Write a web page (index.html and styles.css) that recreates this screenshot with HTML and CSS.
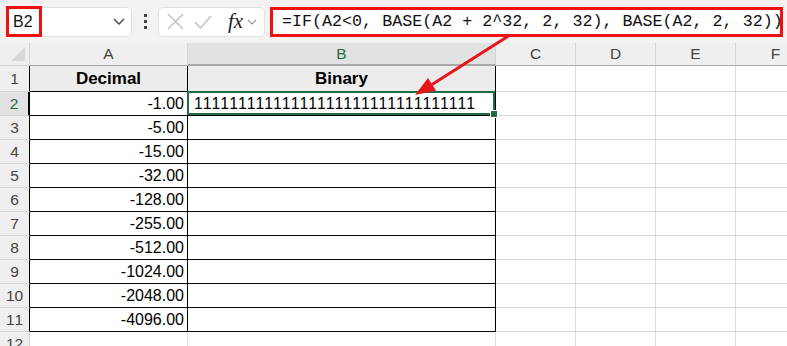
FILE: index.html
```html
<!DOCTYPE html>
<html lang="en">
<head>
  <meta charset="UTF-8">
  <title>Decimal to Binary</title>
  <link rel="stylesheet" href="styles.css">
</head>
<body>

  <div class="toolbar">
    <div class="namebox">
      <span class="cellref">B2</span>
      <svg class="chev" width="12" height="7" viewBox="0 0 12 7"><path d="M1 1 L6 6 L11 1" fill="none" stroke="#444" stroke-width="1.4"/></svg>
    </div>
    <div class="dots"><i></i><i></i><i></i></div>
    <div class="fxbox">
      <svg width="17" height="17" viewBox="0 0 17 17"><path d="M1 1 L16 16 M16 1 L1 16" stroke="#bdbdbd" stroke-width="1.3"/></svg>
      <svg width="18" height="16" viewBox="0 0 18 16"><path d="M1 8 L6.5 14 L17 2" fill="none" stroke="#bdbdbd" stroke-width="1.3"/></svg>
      <span class="fx">fx</span>
      <svg width="10" height="6" viewBox="0 0 10 6"><path d="M1 1 L5 5 L9 1" fill="none" stroke="#999" stroke-width="1.2"/></svg>
    </div>
    <div class="formula">=IF(A2&lt;0, BASE(A2 + 2^32, 2, 32), BASE(A2, 2, 32))</div>
  </div>

  <div class="sheet">
    <div class="hd corner"><span class="tri"></span></div>
    <div class="hd col">A</div>
    <div class="hd col colsel">B</div>
    <div class="hd col">C</div>
    <div class="hd col">D</div>
    <div class="hd col">E</div>
    <div class="hd col">F</div>
    <div class="hd col">G</div>

    <div class="hd row edge">1</div>
    <div class="c data title">Decimal</div>
    <div class="c data title">Binary</div>
    <div class="c"></div><div class="c"></div><div class="c"></div><div class="c"></div><div class="c"></div>

    <div class="hd row edge rowsel">2</div>
    <div class="c data num">-1.00</div>
    <div class="c data bin sel">11111111111111111111111111111111</div>
    <div class="c"></div><div class="c"></div><div class="c"></div><div class="c"></div><div class="c"></div>

    <div class="hd row edge">3</div>
    <div class="c data num">-5.00</div>
    <div class="c data"></div>
    <div class="c"></div><div class="c"></div><div class="c"></div><div class="c"></div><div class="c"></div>

    <div class="hd row edge">4</div>
    <div class="c data num">-15.00</div>
    <div class="c data"></div>
    <div class="c"></div><div class="c"></div><div class="c"></div><div class="c"></div><div class="c"></div>

    <div class="hd row edge">5</div>
    <div class="c data num">-32.00</div>
    <div class="c data"></div>
    <div class="c"></div><div class="c"></div><div class="c"></div><div class="c"></div><div class="c"></div>

    <div class="hd row edge">6</div>
    <div class="c data num">-128.00</div>
    <div class="c data"></div>
    <div class="c"></div><div class="c"></div><div class="c"></div><div class="c"></div><div class="c"></div>

    <div class="hd row edge">7</div>
    <div class="c data num">-255.00</div>
    <div class="c data"></div>
    <div class="c"></div><div class="c"></div><div class="c"></div><div class="c"></div><div class="c"></div>

    <div class="hd row edge">8</div>
    <div class="c data num">-512.00</div>
    <div class="c data"></div>
    <div class="c"></div><div class="c"></div><div class="c"></div><div class="c"></div><div class="c"></div>

    <div class="hd row edge">9</div>
    <div class="c data num">-1024.00</div>
    <div class="c data"></div>
    <div class="c"></div><div class="c"></div><div class="c"></div><div class="c"></div><div class="c"></div>

    <div class="hd row edge">10</div>
    <div class="c data num">-2048.00</div>
    <div class="c data"></div>
    <div class="c"></div><div class="c"></div><div class="c"></div><div class="c"></div><div class="c"></div>

    <div class="hd row edge">11</div>
    <div class="c data num">-4096.00</div>
    <div class="c data"></div>
    <div class="c"></div><div class="c"></div><div class="c"></div><div class="c"></div><div class="c"></div>

    <div class="hd row">12</div>
    <div class="c"></div><div class="c"></div>
    <div class="c"></div><div class="c"></div><div class="c"></div><div class="c"></div><div class="c"></div>
  </div>

  <svg class="arrow" width="787" height="346" viewBox="0 0 787 346">
    <line x1="510" y1="35" x2="432" y2="84.5" stroke="#e8141b" stroke-width="3"/>
    <polygon points="415,95 436,90.5 428,78" fill="#e8141b"/>
  </svg>

</body>
</html>
```

FILE: styles.css
```css
body {
  margin: 0;
  width: 787px;
  height: 346px;
  overflow: hidden;
  position: relative;
  background: #fff;
  font-family: 'Liberation Sans', Arial, sans-serif;
  font-kerning: none;
}

/* formula bar */
.toolbar {
  height: 43px;
  background: #f3f2f1;
  display: flex;
  align-items: center;
  padding: 0 4px 0 6px;
  box-sizing: border-box;
}

.namebox {
  width: 126px;
  height: 30px;
  background: #fff;
  border: 1px solid #e3e1df;
  border-radius: 5px;
  box-sizing: border-box;
  display: flex;
  align-items: center;
  justify-content: space-between;
  padding-right: 6px;
}

.cellref {
  width: 36px;
  height: 31px;
  margin-left: -1px;
  border: 3px solid #ee1111;
  box-sizing: border-box;
  font-size: 16px;
  color: #111;
  display: flex;
  align-items: center;
  padding-left: 4px;
}

.dots {
  width: 26px;
  display: flex;
  flex-direction: column;
  align-items: center;
  gap: 3px;
}

.dots i {
  width: 3px;
  height: 3px;
  background: #444;
}

.fxbox {
  width: 107px;
  height: 30px;
  background: #fff;
  border: 1px solid #e3e1df;
  border-radius: 5px;
  box-sizing: border-box;
  display: flex;
  align-items: center;
  gap: 10px;
  padding-left: 8px;
}

.fx {
  font-family: 'Liberation Serif', serif;
  font-style: italic;
  font-size: 21px;
  color: #222;
  margin-left: 6px;
  margin-right: -6px;
}

.formula {
  flex: 1;
  height: 30px;
  margin-left: 5px;
  border: 3px solid #ee1111;
  box-sizing: border-box;
  background: #fff;
  font-family: 'Liberation Mono', monospace;
  font-size: 16.7px;
  color: #111;
  display: flex;
  align-items: center;
  padding-left: 9px;
  white-space: nowrap;
  overflow: hidden;
}

/* grid */
.sheet {
  display: grid;
  grid-template-columns: 30px 158px 308px 80px 80px 80px 80px 80px;
  grid-template-rows: 23px 26px repeat(10, 24px) 24px;
  width: 787px;
  overflow: hidden;
}

.c, .hd {
  box-sizing: border-box;
  border-right: 1px solid #dcdcdc;
  border-bottom: 1px solid #dcdcdc;
  display: flex;
  align-items: center;
  font-size: 16px;
  color: #000;
  white-space: nowrap;
}

.hd {
  background: #efefef;
  color: #444;
  justify-content: center;
  font-size: 15.5px;
  border-color: #d4d4d4;
}

.hd.col {
  border-bottom-color: #a8a8a8;
}

.corner {
  position: relative;
}

.tri {
  position: absolute;
  right: 4px;
  bottom: 4px;
  width: 14px;
  height: 14px;
  background: #d8d8d8;
  clip-path: polygon(100% 0, 100% 100%, 0 100%);
}

.colsel {
  background: #e2e2e2;
  color: #1f6e43;
  border-bottom: 2px solid #1f6e43;
}

.row.edge {
  border-right-color: #000;
}

.rowsel {
  background: #e2e2e2;
  color: #1f6e43;
  border-right: 2px solid #1f6e43;
}

.data {
  border-right-color: #000;
  border-bottom-color: #000;
}

.title {
  background: #ececec;
  font-weight: bold;
  font-size: 17px;
  justify-content: center;
}

.num {
  justify-content: flex-end;
  padding-right: 3px;
}

.bin {
  padding-left: 6px;
  font-size: 15.8px;
}

.sel {
  position: relative;
}

.sel::after {
  content: '';
  position: absolute;
  left: -1px;
  top: -1px;
  right: 0;
  bottom: 0;
  border: 2px solid #1f6e43;
}

.sel::before {
  content: '';
  position: absolute;
  right: -3px;
  bottom: -3px;
  width: 6px;
  height: 6px;
  background: #1f6e43;
  border: 1px solid #fff;
  z-index: 2;
}

.arrow {
  position: absolute;
  left: 0;
  top: 0;
  pointer-events: none;
}
```
